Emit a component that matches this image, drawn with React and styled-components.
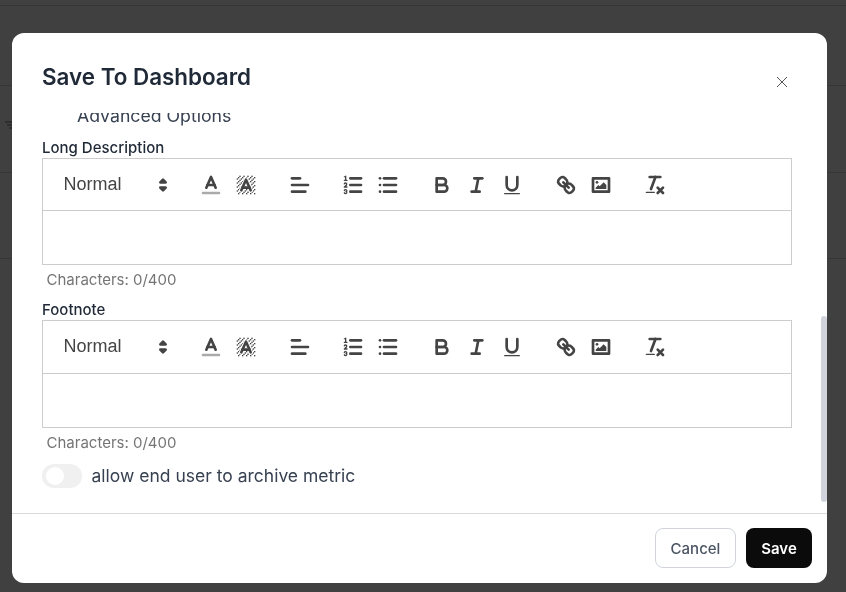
import React from 'react'
import styled, { createGlobalStyle } from 'styled-components';

const GlobalStyle = createGlobalStyle`
    html, body {
        margin: 0;
        padding: 0;
        height: 100%;
        overflow: hidden;
        background: #404040;
    }
    * {
        box-sizing: border-box;
    }
`;

const hatchCells = [];
for (let x = 2; x < 16; x++) {
    for (let y = 2; y < 16; y++) {
        if ((x + y) % 3 === 0) hatchCells.push([x, y]);
    }
}

const ColorIcon = () => (
    <Glyph viewBox="0 0 18 18">
        <line x1="3" x2="15" y1="15" y2="15" stroke="#aaa" />
        <polyline points="5.5 11 9 3 12.5 11" />
        <line x1="11.63" x2="6.38" y1="9" y2="9" />
    </Glyph>
);

const BackgroundIcon = () => (
    <Glyph viewBox="0 0 18 18">
        {hatchCells.map(([x, y]) => (
            <rect key={`${x}-${y}`} className="fill" x={x} y={y} width="1" height="1" />
        ))}
        <polyline points="5.5 13 9 5 12.5 13" stroke="#fff" strokeWidth="3.4" />
        <polyline points="5.5 13 9 5 12.5 13" />
        <line x1="11.63" x2="6.38" y1="11" y2="11" />
    </Glyph>
);

const AlignIcon = () => (
    <Glyph viewBox="0 0 18 18">
        <line x1="3" x2="15" y1="9" y2="9" />
        <line x1="3" x2="13" y1="14" y2="14" />
        <line x1="3" x2="9" y1="4" y2="4" />
    </Glyph>
);

const OrderedIcon = () => (
    <Glyph viewBox="0 0 18 18">
        <line x1="7" x2="15" y1="4" y2="4" />
        <line x1="7" x2="15" y1="9" y2="9" />
        <line x1="7" x2="15" y1="14" y2="14" />
        <line className="thin" x1="2.5" x2="4.5" y1="5.5" y2="5.5" />
        <path className="fill" d="M3.5,6A0.5,0.5,0,0,1,3,5.5V3.085l-0.276.138A0.5,0.5,0,0,1,2.053,3c-0.124-.247-0.023-0.324.224-0.447l1-.5A0.5,0.5,0,0,1,4,2.5v3A0.5,0.5,0,0,1,3.5,6Z" />
        <path className="thin" d="M4.5,10.5h-2c0-.234,1.85-1.076,1.85-2.234A0.959,0.959,0,0,0,2.5,8.156" />
        <path className="thin" d="M2.5,14.846a0.959,0.959,0,0,0,1.85-.109A0.7,0.7,0,0,0,3.75,14a0.688,0.688,0,0,0,.6-0.736,0.959,0.959,0,0,0-1.85-.109" />
    </Glyph>
);

const BulletIcon = () => (
    <Glyph viewBox="0 0 18 18">
        <line x1="6" x2="15" y1="4" y2="4" />
        <line x1="6" x2="15" y1="9" y2="9" />
        <line x1="6" x2="15" y1="14" y2="14" />
        <line x1="3" x2="3" y1="4" y2="4" />
        <line x1="3" x2="3" y1="9" y2="9" />
        <line x1="3" x2="3" y1="14" y2="14" />
    </Glyph>
);

const BoldIcon = () => (
    <Glyph viewBox="0 0 18 18">
        <path d="M5,4H9.5A2.5,2.5,0,0,1,12,6.5v0A2.5,2.5,0,0,1,9.5,9H5A0,0,0,0,1,5,9V4A0,0,0,0,1,5,4Z" />
        <path d="M5,9h5.5A2.5,2.5,0,0,1,13,11.5v0A2.5,2.5,0,0,1,10.5,14H5a0,0,0,0,1,0,0V9A0,0,0,0,1,5,9Z" />
    </Glyph>
);

const ItalicIcon = () => (
    <Glyph viewBox="0 0 18 18">
        <line x1="7" x2="13" y1="4" y2="4" />
        <line x1="5" x2="11" y1="14" y2="14" />
        <line x1="8" x2="10" y1="14" y2="4" />
    </Glyph>
);

const UnderlineIcon = () => (
    <Glyph viewBox="0 0 18 18">
        <path d="M5,3V9a4.012,4.012,0,0,0,4,4H9a4.012,4.012,0,0,0,4-4V3" />
        <rect className="fill" height="1" rx="0.5" ry="0.5" width="12" x="3" y="15" />
    </Glyph>
);

const LinkIcon = () => (
    <Glyph viewBox="0 0 18 18">
        <line x1="7" x2="11" y1="7" y2="11" />
        <path d="M8.9,4.577a3.476,3.476,0,0,1,.36,4.679A3.476,3.476,0,0,1,4.577,8.9C3.185,7.5,2.035,6.4,4.217,4.217S7.5,3.185,8.9,4.577Z" />
        <path d="M13.423,9.1a3.476,3.476,0,0,0-4.679-.36,3.476,3.476,0,0,0,.36,4.679c1.392,1.392,2.5,2.542,4.679.36S14.815,10.5,13.423,9.1Z" />
    </Glyph>
);

const ImageIcon = () => (
    <Glyph viewBox="0 0 18 18">
        <rect height="10" width="12" x="3" y="4" />
        <circle className="fill" cx="6" cy="7" r="1" />
        <polyline className="fill" points="5 12 5 11 7 9 8 10 11 7 13 9 13 12 5 12" />
    </Glyph>
);

const CleanIcon = () => (
    <Glyph viewBox="0 0 18 18">
        <line x1="5" x2="13" y1="3" y2="3" />
        <line x1="6" x2="9.35" y1="12" y2="3" />
        <line x1="11" x2="15" y1="11" y2="15" />
        <line x1="15" x2="11" y1="11" y2="15" />
        <rect className="fill" height="1" rx="0.5" ry="0.5" width="7" x="2" y="14" />
    </Glyph>
);

const toolGroups = [
    [ColorIcon, BackgroundIcon],
    [AlignIcon],
    [OrderedIcon, BulletIcon],
    [BoldIcon, ItalicIcon, UnderlineIcon],
    [LinkIcon, ImageIcon],
    [CleanIcon],
];

const Editor = ({ label }) => (
    <Field>
        <FieldLabel>{label}</FieldLabel>
        <EditorBox>
            <Toolbar>
                <Picker>
                    Normal
                    <PickerArrows viewBox="0 0 18 18">
                        <polygon points="7 11 9 13 11 11 7 11" />
                        <polygon points="7 7 9 5 11 7 7 7" />
                    </PickerArrows>
                </Picker>
                {toolGroups.map((group, i) => (
                    <ToolGroup key={i}>
                        {group.map((Icon, j) => (
                            <ToolButton key={j}><Icon /></ToolButton>
                        ))}
                    </ToolGroup>
                ))}
            </Toolbar>
            <EditArea />
        </EditorBox>
        <Counter>Characters: 0/400</Counter>
    </Field>
);

const App = () => {
    return (
        <>
            <GlobalStyle />
            <Backdrop>
                <BackdropRow $height={6} />
                <BackdropRow $height={80} />
                <BackdropRow $height={87}>
                    <FilterMark viewBox="0 0 12 8">
                        <path d="M0 1h12M2 4h8M4 7h4" />
                    </FilterMark>
                </BackdropRow>
                <BackdropRow $height={86} />
            </Backdrop>
            <Modal>
                <ModalHeader>
                    <Title>Save To Dashboard</Title>
                    <CloseButton>
                        <svg viewBox="0 0 12 12" width="12" height="12">
                            <path d="M1 1l10 10M11 1L1 11" stroke="#555" strokeWidth="1" fill="none" />
                        </svg>
                    </CloseButton>
                </ModalHeader>
                <ModalBody>
                    <ClippedOption>Advanced Options</ClippedOption>
                    <Editor label="Long Description" />
                    <Editor label="Footnote" />
                    <ToggleRow>
                        <Toggle><Knob /></Toggle>
                        <ToggleLabel>allow end user to archive metric</ToggleLabel>
                    </ToggleRow>
                </ModalBody>
                <ScrollThumb />
                <ModalFooter>
                    <CancelButton>Cancel</CancelButton>
                    <SaveButton>Save</SaveButton>
                </ModalFooter>
            </Modal>
        </>
    );
};

export default App;

// Page behind the modal
const Backdrop = styled.div`
    height: 592px;
    background: #404040;
`;

const BackdropRow = styled.div`
    height: ${props => props.$height}px;
    border-bottom: 1px solid #363636;
    display: flex;
    align-items: center;
`;

const FilterMark = styled.svg`
    width: 12px;
    height: 8px;
    margin-left: 5px;
    margin-top: -8px;
    stroke: #1c1c1c;
    stroke-width: 1.2;
    fill: none;
`;

// Modal
const Modal = styled.div`
    position: fixed;
    left: 12px;
    top: 33px;
    width: 815px;
    height: 550px;
    display: flex;
    flex-direction: column;
    background: #ffffff;
    border-radius: 12px;
    overflow: hidden;
    font-family: Inter, "Noto Sans", sans-serif;
`;

const ModalHeader = styled.div`
    flex: 0 0 80px;
    display: flex;
    align-items: flex-start;
    justify-content: space-between;
    padding: 29px 39px 0 30px;
`;

const Title = styled.h2`
    margin: 0;
    color: #1f2937;
    font-size: 22.4px;
    line-height: 30px;
    font-weight: 600;
`;

const CloseButton = styled.div`
    display: flex;
    margin-top: 14px;
`;

const ModalBody = styled.div`
    flex: 1;
    min-height: 0;
    overflow: hidden;
    padding: 0 35px 0 30px;
    display: flex;
    flex-direction: column;
`;

const ClippedOption = styled.div`
    margin: -9px 0 0 35px;
    color: #374151;
    font-size: 17.7px;
    line-height: 24px;
    flex: none;
`;

const Field = styled.div`
    display: flex;
    flex-direction: column;
    flex: none;
    & + & {
        margin-top: 0.8px;
    }
`;

const FieldLabel = styled.label`
    color: #1f2937;
    font-size: 15px;
    font-weight: 500;
    line-height: 20px;
    margin: 9.5px 0 0;
`;

const EditorBox = styled.div`
    border: 1px solid #cccccc;
    display: flex;
    flex-direction: column;
`;

const Toolbar = styled.div`
    height: 52.5px;
    border-bottom: 1px solid #cccccc;
    padding-left: 12.5px;
    display: flex;
    align-items: center;
`;

const Picker = styled.div`
    width: 119px;
    padding-left: 8px;
    display: flex;
    align-items: center;
    justify-content: space-between;
    color: #444444;
    font-family: "Liberation Sans", Arial, sans-serif;
    font-size: 18px;
    margin-right: 18.8px;
`;

const PickerArrows = styled.svg`
    width: 24px;
    height: 24px;
    margin-top: 1px;
    fill: #444444;
    stroke: #444444;
    stroke-width: 2;
    stroke-linejoin: round;
`;

const ToolGroup = styled.div`
    display: flex;
    margin-top: 1px;
    margin-right: 18.85px;
`;

const ToolButton = styled.div`
    width: 35px;
    height: 28px;
    display: flex;
    align-items: center;
    justify-content: center;
`;

const Glyph = styled.svg`
    width: 24px;
    height: 24px;
    fill: none;
    stroke: #444444;
    stroke-width: 2;
    stroke-linecap: round;
    stroke-linejoin: round;

    .fill {
        fill: #444444;
        stroke: none;
    }
    .thin {
        stroke-width: 1;
    }
`;

const EditArea = styled.div`
    height: 52.9px;
`;

const Counter = styled.div`
    color: #757575;
    font-size: 15px;
    line-height: 20px;
    padding: 5px 0 0 4.5px;
`;

const ToggleRow = styled.div`
    display: flex;
    align-items: center;
    gap: 9.5px;
    margin-top: 11.3px;
    flex: none;
`;

const Toggle = styled.div`
    width: 40px;
    height: 24px;
    border-radius: 12px;
    background: #f0f0f0;
    padding: 3px 4px;
`;

const Knob = styled.div`
    width: 18px;
    height: 18px;
    border-radius: 50%;
    background: #ffffff;
`;

const ToggleLabel = styled.span`
    color: #374151;
    font-size: 17.5px;
    line-height: 24px;
`;

const ScrollThumb = styled.div`
    position: absolute;
    right: 0;
    top: 283px;
    width: 6px;
    height: 186px;
    border-radius: 3px;
    background: #d1d5db;
`;

const ModalFooter = styled.div`
    flex: 0 0 70px;
    border-top: 1px solid #d9d9d9;
    padding: 14px 15px 0 0;
    display: flex;
    justify-content: flex-end;
    align-items: flex-start;
    gap: 10px;
`;

const CancelButton = styled.button`
    width: 81px;
    height: 40px;
    border: 1px solid #d1d5db;
    border-radius: 8px;
    background: #ffffff;
    color: #4b5563;
    font-family: inherit;
    font-size: 15px;
    font-weight: 500;
`;

const SaveButton = styled.button`
    width: 66px;
    height: 40px;
    border: none;
    border-radius: 8px;
    background: #0b0b0b;
    color: #ffffff;
    font-family: inherit;
    font-size: 15px;
    font-weight: 600;
`;
